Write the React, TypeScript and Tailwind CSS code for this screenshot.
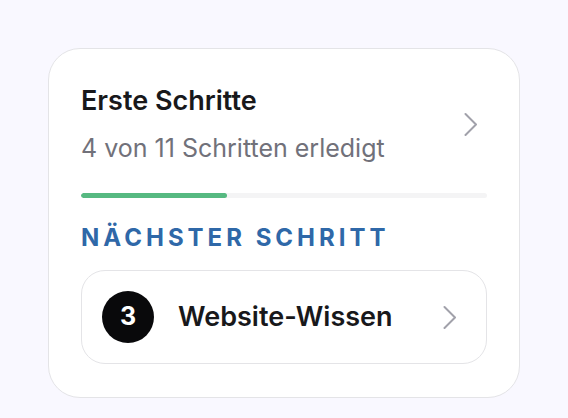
const completed = 4;
const total = 11;

function Chevron() {
  return (
    <svg
      aria-hidden="true"
      className="h-6 w-4 shrink-0 text-[#a1a1aa]"
      viewBox="0 0 16 24"
      fill="none"
      stroke="currentColor"
      strokeWidth="2"
      strokeLinecap="round"
      strokeLinejoin="round"
    >
      <path d="M2.5 2L13 12.5L2.5 23" />
    </svg>
  );
}

export default function App() {
  return (
    <main className="min-h-screen bg-[#f9f8ff] px-12 pt-12 font-['Inter',sans-serif] text-[#18181b]">
      <section className="rounded-[32px] border border-[#e4e4e7] bg-white px-8 pt-8 pb-[33px]">
        <button type="button" className="flex w-full items-center justify-between pr-2 text-left">
          <span className="flex flex-col gap-2">
            <span className="text-[27px] leading-10 font-semibold">Erste Schritte</span>
            <span className="text-[25px] leading-[38px] text-[#71717a]">
              {completed} von {total} Schritten erledigt
            </span>
          </span>
          <Chevron />
        </button>

        <div
          role="progressbar"
          aria-label="Erste Schritte"
          aria-valuenow={completed}
          aria-valuemin={0}
          aria-valuemax={total}
          className="mt-[26px] h-[5px] overflow-hidden rounded-full bg-[#f4f4f5]"
        >
          <div
            className="h-full rounded-full bg-[#56b981]"
            style={{ width: `${Math.round((completed / total) * 100)}%` }}
          />
        </div>

        <h2 className="mt-6 text-[24px] leading-8 font-bold tracking-[4px] text-[#2f68a8] uppercase">
          Nächster Schritt
        </h2>

        <button
          type="button"
          className="mt-4 flex w-full items-center rounded-3xl border border-[#e4e4e7] px-5 py-5 text-left"
        >
          <span className="flex size-[52px] items-center justify-center rounded-full bg-[#09090b] text-[25px] font-bold text-white">
            3
          </span>
          <span className="ml-6 flex-1 text-[27px] leading-[42px] font-semibold">Website-Wissen</span>
          <span className="mr-2 flex">
            <Chevron />
          </span>
        </button>
      </section>
    </main>
  );
}
